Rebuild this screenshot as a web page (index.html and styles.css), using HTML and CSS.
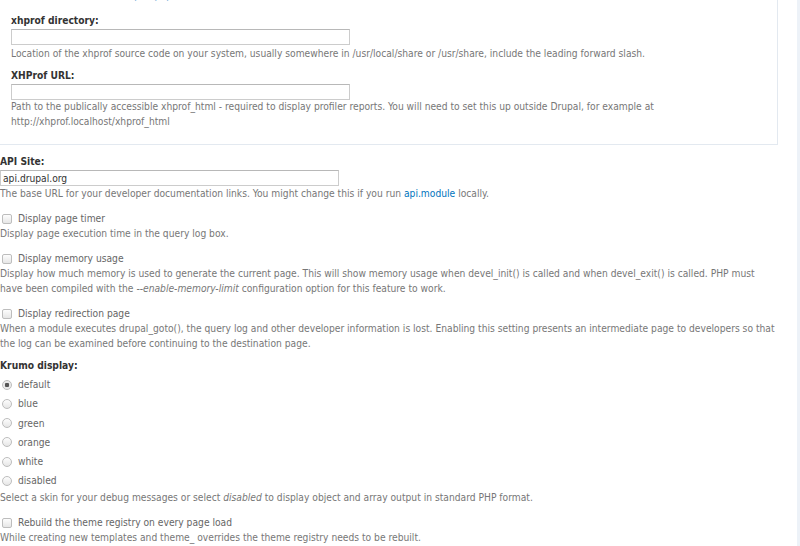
FILE: index.html
```html
<!DOCTYPE html>
<html>
<head>
<meta charset="utf-8">
<link rel="stylesheet" href="styles.css">
</head>
<body>
<div class="page">
  <main class="main">
    <section class="box">
      <div class="cut"><a href="#">xhprof.php</a></div>
      <div class="item first">
        <label class="lbl">xhprof directory:</label>
        <input class="text wide" type="text" value="">
        <div class="desc">Location of the xhprof source code on your system, usually somewhere in /usr/local/share or /usr/share, include the leading forward slash.</div>
      </div>
      <div class="item">
        <label class="lbl">XHProf URL:</label>
        <input class="text wide" type="text" value="">
        <div class="desc">Path to the publically accessible xhprof_html - required to display profiler reports. You will need to set this up outside Drupal, for example at http://xhprof.localhost/xhprof_html</div>
      </div>
    </section>

    <div class="item api">
      <label class="lbl">API Site:</label>
      <input class="text" type="text" value="api.drupal.org">
      <div class="desc">The base URL for your developer documentation links. You might change this if you run <a href="#">api.module</a> locally.</div>
    </div>

    <div class="item check">
      <label class="opt"><input type="checkbox" class="cb"> Display page timer</label>
      <div class="desc">Display page execution time in the query log box.</div>
    </div>

    <div class="item check">
      <label class="opt"><input type="checkbox" class="cb"> Display memory usage</label>
      <div class="desc">Display how much memory is used to generate the current page. This will show memory usage when devel_init() is called and when devel_exit() is called. PHP must have been compiled with the <em>--enable-memory-limit</em> configuration option for this feature to work.</div>
    </div>

    <div class="item check">
      <label class="opt"><input type="checkbox" class="cb"> Display redirection page</label>
      <div class="desc">When a module executes drupal_goto(), the query log and other developer information is lost. Enabling this setting presents an intermediate page to developers so that the log can be examined before continuing to the destination page.</div>
    </div>

    <div class="item krumo">
      <label class="lbl">Krumo display:</label>
      <div class="radios">
        <label class="opt radio"><input type="radio" name="k" class="rb" checked> default</label>
        <label class="opt radio"><input type="radio" name="k" class="rb"> blue</label>
        <label class="opt radio"><input type="radio" name="k" class="rb"> green</label>
        <label class="opt radio"><input type="radio" name="k" class="rb"> orange</label>
        <label class="opt radio"><input type="radio" name="k" class="rb"> white</label>
        <label class="opt radio"><input type="radio" name="k" class="rb"> disabled</label>
      </div>
      <div class="desc">Select a skin for your debug messages or select <em>disabled</em> to display object and array output in standard PHP format.</div>
    </div>

    <div class="item check">
      <label class="opt"><input type="checkbox" class="cb"> Rebuild the theme registry on every page load</label>
      <div class="desc">While creating new templates and theme_ overrides the theme registry needs to be rebuilt.</div>
    </div>
  </main>
  <div class="strip"></div>
</div>
</body>
</html>
```

FILE: styles.css
```css
html, body {
  margin: 0;
  padding: 0;
  background: #fff;
  overflow: hidden;
}
body {
  font-family: "DejaVu Sans", "Liberation Sans", sans-serif;
  font-stretch: condensed;
  font-size: 10.2px;
  line-height: 15px;
  color: #333;
}
.page {
  display: flex;
  width: 800px;
  height: 546px;
  overflow: hidden;
}
.main {
  flex: 1;
  min-width: 0;
  padding-right: 19px;
}
.strip {
  width: 3px;
  background: #edf2f8;
}
a {
  color: #0074bd;
  text-decoration: none;
}
.box {
  margin: 0 0 0 -2px;
  padding: 0 10px 15px 12px;
  border: 1px solid #e3e9f0;
  border-top: none;
}
.cut {
  margin-top: -12px;
  height: 14px;
  padding-left: 112px;
  opacity: 0.6;
}
.item {
  margin-top: 7px;
  display: flex;
  flex-direction: column;
  align-items: flex-start;
}
.item.first {
  margin-top: 11px;
}
.lbl {
  font-weight: bold;
  color: #333;
}
.text {
  box-sizing: border-box;
  width: 339px;
  height: 16px;
  margin: 1px 0 0 0;
  padding: 0 2px;
  border: 1px solid #ccc;
  border-top-color: #b8b8b8;
  font-family: inherit;
  font-stretch: condensed;
  font-size: 10.2px;
  color: #333;
  background: #fff;
  outline: none;
}
.desc {
  color: #777;
  margin-top: 0;
}
.box .desc {
  margin-top: 1px;
}
.box .item + .item .desc {
  margin-top: -1px;
}
.item.api {
  margin-top: 9px;
}
.item.check {
  margin-top: 10px;
}
.item.krumo {
  margin-top: 7px;
}
.opt {
  display: flex;
  align-items: center;
  color: #666;
}
.cb, .rb {
  appearance: none;
  -webkit-appearance: none;
  margin: 0 6px 0 2px;
  width: 10px;
  height: 10px;
  border: 1px solid #bdbdbd;
  background: linear-gradient(#fdfdfd, #e6e6e6);
  box-sizing: border-box;
}
.cb {
  border-radius: 2px;
}
.rb {
  border-radius: 50%;
}
.rb:checked {
  background: radial-gradient(circle, #555 0, #555 2px, #e6e6e6 2.5px, #f8f8f8 100%);
}
.radios {
  display: flex;
  flex-direction: column;
  gap: 4.3px;
  margin-top: 4px;
  margin-bottom: 2px;
}
.desc em {
  font-style: italic;
}
```
